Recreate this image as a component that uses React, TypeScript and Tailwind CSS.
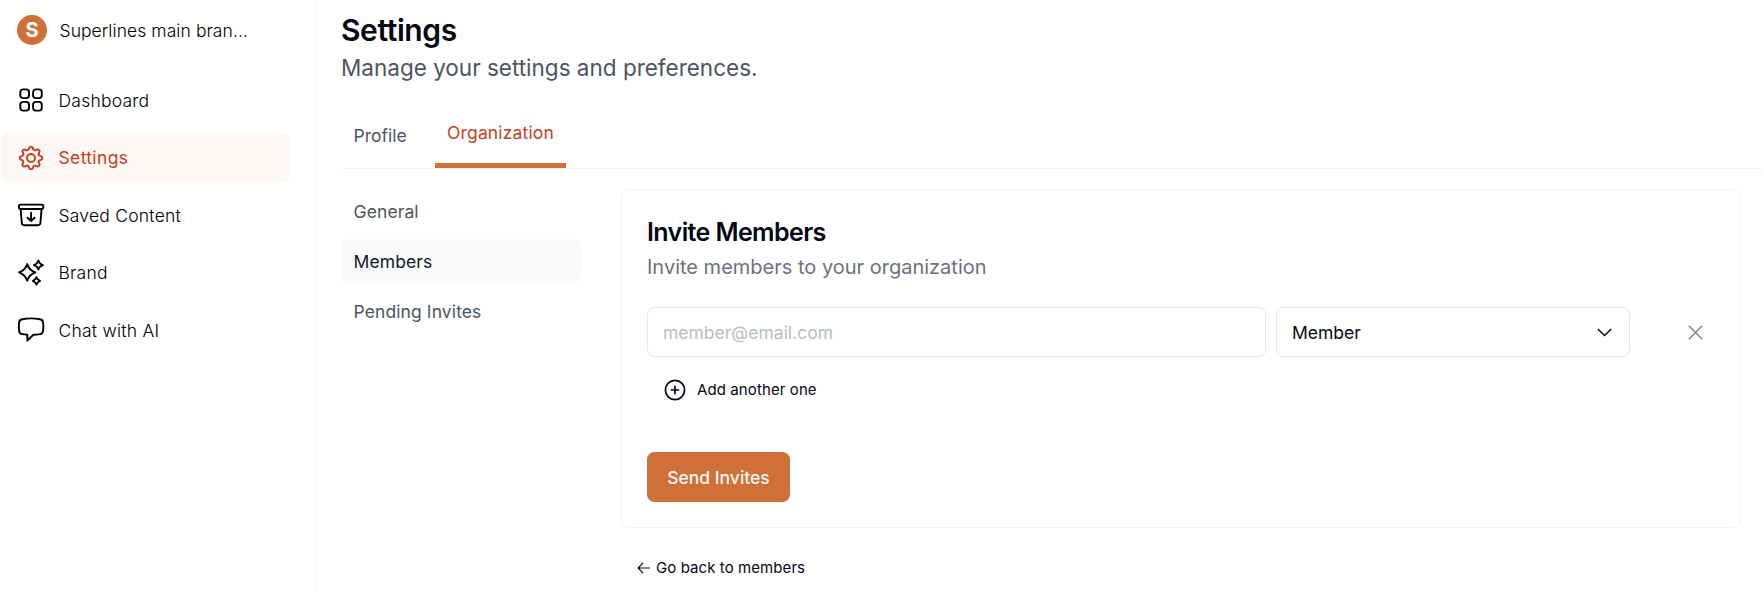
import React, { useState } from 'react';
import clsx from 'clsx';

type IconProps = { className?: string };

const Svg = ({ className, children }: IconProps & { children: React.ReactNode }) => (
  <svg
    className={clsx('size-[30px] shrink-0', className)}
    viewBox="0 0 30 30"
    fill="none"
    stroke="currentColor"
    strokeWidth={1.9}
    strokeLinecap="round"
    strokeLinejoin="round"
  >
    {children}
  </svg>
);

const DashboardIcon = () => (
  <Svg>
    <rect x="4.3" y="4.4" width="8.7" height="8.7" rx="2.8" />
    <rect x="17.1" y="4.4" width="8.7" height="8.7" rx="2.8" />
    <rect x="4.3" y="16.9" width="8.7" height="8.7" rx="2.8" />
    <rect x="17.1" y="16.9" width="8.7" height="8.7" rx="2.8" />
  </Svg>
);

// eight rounded teeth around the hub
const gearPath = Array.from({ length: 96 }, (_, i) => {
  const a = (i / 96) * Math.PI * 2;
  const r = 9.85 + 1.5 * Math.tanh(1.6 * Math.cos(8 * a));
  return `${i ? 'L' : 'M'}${(15 + r * Math.cos(a)).toFixed(2)} ${(15 + r * Math.sin(a)).toFixed(2)}`;
}).join('') + 'Z';

const GearIcon = () => (
  <Svg>
    <path d={gearPath} />
    <circle cx="15" cy="15" r="4" />
  </Svg>
);

const SavedIcon = () => (
  <Svg>
    <rect x="2.9" y="4.6" width="24.4" height="4.4" rx="1.4" />
    <path d="M4.6 9.2 5.8 23q.2 2.2 2.4 2.2h13.8q2.2 0 2.4-2.2L25.6 9.2M15.1 12.8v8M11.6 17.8l3.5 3.2 3.5-3.2" />
  </Svg>
);

const SparkleIcon = () => (
  <Svg>
    <path d="M11.2 6.1Q13.3 12.5 19.4 14.4 13.3 16.5 11.2 22.7 9.1 16.5 3 14.4 9.1 12.5 11.2 6.1Z" />
    <path d="M22.4 2.5Q23.4 6 26.9 7.1 23.4 8.1 22.4 11.5 21.4 8.1 17.9 7.1 21.4 6 22.4 2.5Z" />
    <path d="M20.4 19.1Q21.3 21.9 24.1 22.8 21.3 23.8 20.4 26.5 19.6 23.8 16.8 22.8 19.6 21.9 20.4 19.1Z" />
  </Svg>
);

const ChatIcon = () => (
  <Svg>
    <path d="M6.2 4.2Q15 2.6 24 4.2q2.8.5 3.1 3.3.5 4.2 0 8.3-.3 2.8-3.1 3.3-3.2.6-6.6.7l-6.1 5.7v-5.8q-2.6-.2-5.1-.6-2.8-.5-3.1-3.3-.5-4.1 0-8.3.3-2.8 3.1-3.3Z" />
  </Svg>
);

const navItems = [
  { label: 'Dashboard', icon: DashboardIcon },
  { label: 'Settings', icon: GearIcon },
  { label: 'Saved Content', icon: SavedIcon },
  { label: 'Brand', icon: SparkleIcon },
  { label: 'Chat with AI', icon: ChatIcon },
];

const sections = ['General', 'Members', 'Pending Invites'];

function Sidebar() {
  return (
    <aside className="w-[316px] shrink-0 border-r border-[#f3f4f6] pl-px pt-[15px]">
      <div className="flex h-[30px] items-center gap-[12.5px] pl-4">
        <div className="flex size-[30px] items-center justify-center rounded-full bg-[#cf7039] text-[20px] font-bold leading-none text-white">
          S
        </div>
        <span className="pt-px text-[17.5px] font-light leading-[30px] tracking-[0.07px] text-black">Superlines main bran...</span>
      </div>
      <nav className="mt-[30px] flex w-[289px] flex-col gap-[7.5px]">
        {navItems.map(({ label, icon: Icon }) => (
          <a
            key={label}
            className={clsx(
              'flex h-[50px] items-center gap-[12.5px] rounded-[7.5px] pl-[15px] text-[17.5px]',
              label === 'Settings' ? 'bg-[#fdf7f5] tracking-[0.35px] text-[#c2411c]' : 'font-light tracking-[0.23px] text-black'
            )}
          >
            <Icon />
            <span className="pt-[1.5px]">{label}</span>
          </a>
        ))}
      </nav>
    </aside>
  );
}

function InviteCard() {
  const [email, setEmail] = useState('');

  return (
    <section className="h-[339px] rounded-[7.5px] border border-[#f3f4f6] px-[25px] pt-[25px]">
      <h2 className="text-[25px] font-semibold leading-[35px] tracking-[-0.6px]">Invite Members</h2>
      <p className="text-[20px] leading-[35px] text-[#6b7280]">Invite members to your organization</p>
      <div className="mt-[22px] flex items-center">
        <input
          value={email}
          onChange={(e) => setEmail(e.target.value)}
          placeholder="member@email.com"
          className="h-[50px] w-[619px] rounded-[7.5px] border border-[#e5e7eb] px-[15px] text-[17.5px] outline-none placeholder:text-[#b9bdc5]"
        />
        <button className="ml-[10px] flex h-[50px] w-[354px] items-center justify-between rounded-[7.5px] border border-[#e5e7eb] px-[15px] text-[17.5px]">
          <span className="pt-[2px]">Member</span>
          <svg className="mr-[2px] h-[9px] w-[15px]" viewBox="0 0 15 9" fill="none" stroke="currentColor" strokeWidth="1.4">
            <path d="m.8 1 6.7 6.6L14.2 1" />
          </svg>
        </button>
        <svg className="ml-[58px] size-[15px] text-[#80848c]" viewBox="0 0 15 15" fill="none" stroke="currentColor" strokeWidth="1.5">
          <path d="m.8.8 13.4 13.4M14.2.8.8 14.2" />
        </svg>
      </div>
      <button className="ml-[16.5px] mt-[21px] flex h-[24px] items-center gap-[11.5px] text-[15px] tracking-[0.1px]">
        <svg className="size-[22px]" viewBox="0 0 22 22" fill="none" stroke="currentColor" strokeWidth="1.7" strokeLinecap="round">
          <circle cx="11" cy="11" r="9.6" />
          <path d="M11 7.4v7.2M7.4 11h7.2" />
        </svg>
        Add another one
      </button>
      <button className="mt-[50px] h-[50px] w-[143px] rounded-[7.5px] bg-[#cf7039] pt-[2px] text-[17.5px] font-medium text-[#fdf7f5]">
        Send Invites
      </button>
    </section>
  );
}

export default function App() {
  return (
    <div className="flex h-[591px] overflow-hidden bg-white font-['Inter',sans-serif] text-[#030712]">
      <Sidebar />
      <main className="flex-1 pl-[25px] pt-[10px]">
        <h1 className="text-[30px] font-semibold leading-[40px] tracking-[-0.4px]">Settings</h1>
        <p className="text-[22.5px] leading-[35px] text-[#4b5563]">Manage your settings and preferences.</p>
        <div className="mt-[22px] flex h-[62px] items-stretch border-b border-[#f3f4f6] text-[17.5px]">
          <button className="w-[94px] pb-[3px] pl-[12.5px] text-left text-[#4b5563]">Profile</button>
          <button className="w-[131px] border-b-[5px] border-[#cf7039] pb-[3px] tracking-[0.16px] text-[#c2411c]">
            Organization
          </button>
        </div>
        <div className="flex pt-5">
          <nav className="flex w-[240px] shrink-0 flex-col gap-[5px]">
            {sections.map((section) => (
              <a
                key={section}
                className={clsx(
                  'flex h-[45px] items-center rounded-[7.5px] pl-[12.5px] pt-[2px] text-[17.5px] tracking-[0.1px]',
                  section === 'Members' ? 'bg-[#f9fafb] text-[#111827]' : 'text-[#4b5563]'
                )}
              >
                {section}
              </a>
            ))}
          </nav>
          <div className="ml-10 w-[1120px]">
            <InviteCard />
            <button className="ml-4 mt-[28px] flex h-[24px] items-center gap-1.5 text-[15px] tracking-[0.08px]">
              <svg className="h-[12px] w-[13px]" viewBox="0 0 13 12" fill="none" stroke="currentColor" strokeWidth="1.1">
                <path d="M13 6H1M6 1 1 6l5 5" />
              </svg>
              Go back to members
            </button>
          </div>
        </div>
      </main>
    </div>
  );
}
